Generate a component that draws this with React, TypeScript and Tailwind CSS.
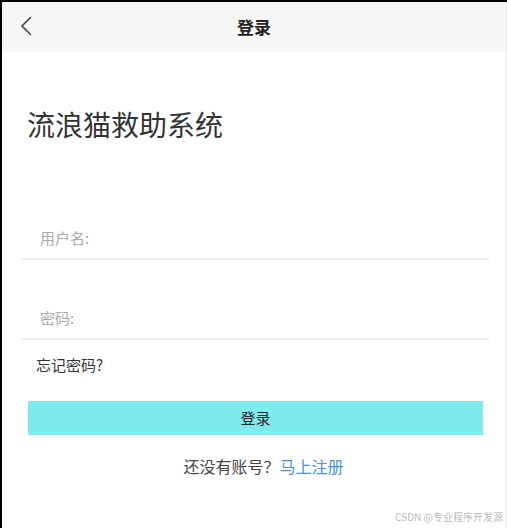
export default function App() {
  return (
    <div
      className="relative w-[507px] h-[528px] bg-white border-t-2 border-l-2 border-black overflow-hidden"
      style={{ fontFamily: '"Noto Sans CJK SC", "Noto Sans", sans-serif' }}
    >
      <div className="flex h-full border-r border-[#e5e5e5] flex-col">
        <div className="relative flex h-[50px] items-center justify-center bg-[#f7f7f7]">
          <svg
            className="absolute left-[16px] top-[12px]"
            width="18"
            height="24"
            viewBox="0 0 18 24"
            fill="none"
          >
            <path d="M13 3 L4 12 L13 21" stroke="#444" strokeWidth="1.6" />
          </svg>
          <span className="text-[17px] font-bold text-[#222]">登录</span>
        </div>

        <div className="flex flex-col pl-[20px] pr-[17px]">
          <h1 className="mt-[51px] pl-[5px] text-[28px] leading-[42px] text-[#333]">
            流浪猫救助系统
          </h1>

          <div className="mt-[73px] flex h-[42px] items-center border-b-2 border-[#ececec] pl-[18px] text-[15px] text-[#aaa]">
            用户名:
          </div>
          <div className="mt-[38px] flex h-[42px] items-center border-b-2 border-[#ececec] pl-[18px] text-[15px] text-[#aaa]">
            密码:
          </div>

          <p className="mt-[14px] pl-[14px] text-[15px] leading-[22px] text-[#333]">
            忘记密码?
          </p>

          <button className="mx-[6px] mt-[25px] h-[34px] bg-[#80ebef] text-[15px] text-[#222]">
            登录
          </button>

          <p className="mt-[19px] pl-[16px] text-center text-[16px] leading-[24px] text-[#444]">
            还没有账号？<span className="text-[#4a90e2]">马上注册</span>
          </p>
        </div>
      </div>

      <span className="absolute bottom-[4px] right-[4px] text-[10px] text-[#bbb]">
        CSDN @专业程序开发源
      </span>
    </div>
  );
}
